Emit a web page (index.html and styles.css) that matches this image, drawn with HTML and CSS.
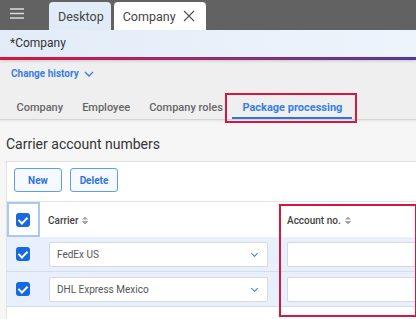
FILE: index.html
```html
<!DOCTYPE html>
<html lang="en">
<head>
  <meta charset="UTF-8">
  <title>Company</title>
  <link rel="stylesheet" href="styles.css">
</head>
<body>
  <div class="topbar">
    <div class="menu-btn">
      <svg width="14" height="11" viewBox="0 0 14 11"><path d="M0 1h14M0 5.5h14M0 10h14" stroke="#dcdcdc" stroke-width="1.6"/></svg>
    </div>
    <div class="doc-tab">Desktop</div>
    <div class="doc-tab active">Company
      <svg class="close" width="12" height="12" viewBox="0 0 12 12"><path d="M1 1l10 10M11 1L1 11" stroke="#555" stroke-width="1.2"/></svg>
    </div>
  </div>

  <div class="titlebar">*Company</div>
  <div class="accent"></div>

  <div class="upper">
    <a class="history">Change history
      <svg width="10" height="6" viewBox="0 0 10 6"><path d="M1 1l4 4 4-4" fill="none" stroke="#3a7fe0" stroke-width="1.3"/></svg>
    </a>
    <nav class="tabs">
      <span class="tab">Company</span>
      <span class="tab">Employee</span>
      <span class="tab">Company roles</span>
      <span class="tab selected">Package processing</span>
    </nav>
  </div>

  <div class="lower">
    <h2 class="section-title">Carrier account numbers</h2>
    <div class="panel">
      <div class="toolbar">
        <button class="btn">New</button>
        <button class="btn">Delete</button>
      </div>
      <div class="grid">
        <div class="cell head check-cell focus"><span class="check"></span></div>
        <div class="cell head">Carrier <span class="sort"></span></div>
        <div class="cell head account-head">Account no. <span class="sort"></span></div>

        <div class="cell row check-cell"><span class="check"></span></div>
        <div class="cell row"><div class="select">FedEx US<span class="chev"></span></div></div>
        <div class="cell row acc"><div class="input"></div></div>

        <div class="cell row check-cell"><span class="check"></span></div>
        <div class="cell row"><div class="select">DHL Express Mexico<span class="chev"></span></div></div>
        <div class="cell row acc"><div class="input"></div></div>
      </div>
    </div>
  </div>
</body>
</html>
```

FILE: styles.css
```css
* {
  margin: 0;
  padding: 0;
  box-sizing: border-box;
}

body {
  font-family: Roboto, 'Liberation Sans', sans-serif;
  width: 416px;
  height: 319px;
  overflow: hidden;
  background: #f6f6f6;
  color: #333;
}

/* top bar */
.topbar {
  height: 30px;
  background: #626262;
  display: flex;
  align-items: flex-end;
}

.menu-btn {
  width: 49px;
  height: 30px;
  display: flex;
  align-items: center;
  padding-left: 10px;
  padding-bottom: 3px;
}

.doc-tab {
  height: 28px;
  padding: 0 7px 0 9px;
  margin-right: 3px;
  border-radius: 4px 4px 0 0;
  background: #e2ecf8;
  font-size: 12.5px;
  color: #444;
  display: flex;
  align-items: center;
}

.doc-tab.active {
  background: #fff;
  padding-right: 11px;
}

.doc-tab .close {
  margin-left: 7px;
}

.titlebar {
  height: 27px;
  line-height: 27px;
  padding-left: 10px;
  font-size: 12px;
  color: #333;
  background: linear-gradient(90deg, #e2ecf8 0%, #eef4fb 100%);
}

.accent {
  height: 3px;
  background: linear-gradient(90deg, #d3163f 0%, #9a2a6c 45%, #4e3b98 100%);
  box-shadow: 0 1px 3px rgba(0, 0, 0, 0.18);
  position: relative;
}

/* upper area */
.upper {
  background: #efefef;
  padding-top: 7px;
  border-bottom: 1px solid #d4d4d4;
  box-shadow: 0 1px 2px rgba(0, 0, 0, 0.08);
}

.history {
  display: flex;
  width: fit-content;
  align-items: center;
  gap: 5px;
  margin-left: 11px;
  font-size: 10px;
  font-weight: 700;
  line-height: 14px;
  color: #3a7fe0;
}

.tabs {
  display: flex;
  margin-top: 12px;
  padding-left: 7px;
}

.tab {
  padding: 8px 9.5px 2px;
  line-height: 14px;
  font-size: 11px;
  font-weight: 500;
  color: #666;
  border-bottom: 2px solid transparent;
}

.tab.selected {
  color: #3a7fe0;
  font-weight: 700;
  padding: 8px 10px 2px;
  border-bottom-color: #2f74e0;
  position: relative;
}

.tab.selected::after {
  content: '';
  position: absolute;
  left: -7px;
  right: -5px;
  top: 0;
  bottom: -6px;
  border: 2px solid #d6173f;
}

/* lower area */
.section-title {
  font-size: 14px;
  font-weight: 400;
  color: #333;
  line-height: 18px;
  padding: 15px 0 8px 6px;
}

.panel {
  margin-left: 6px;
  width: 520px;
  background: #fff;
  border-top: 1px solid #e2e2e2;
  border-left: 1px solid #e2e2e2;
  height: 200px;
}

.toolbar {
  display: flex;
  gap: 8px;
  padding: 6px 7px 9px;
  border-bottom: 1px solid #e4e4e4;
}

.btn {
  width: 48px;
  height: 24px;
  border: 1.5px solid #5f9de8;
  border-radius: 3px;
  background: #f6f9fe;
  color: #2f74e0;
  font-family: inherit;
  font-size: 10px;
  font-weight: 700;
}

.grid {
  display: grid;
  grid-template-columns: 33px 239px 1fr;
}

.cell {
  display: flex;
  align-items: center;
  font-size: 10px;
  color: #444;
}

.cell.head {
  height: 35px;
  padding-left: 8px;
  font-weight: 500;
  padding-top: 1px;
}

.cell.row {
  height: 35px;
  background: #e7f0fc;
  border-bottom: 1px solid #d3deeb;
  padding-left: 9px;
}

.cell.acc {
  padding-left: 8px;
}

.check-cell.cell {
  padding-left: 9px;
}

.check-cell.focus {
  border: 2px solid #a9c9f0;
  padding-left: 7px;
}

.check {
  width: 14px;
  height: 14px;
  border-radius: 3px;
  background: #1769e0;
  display: inline-block;
  position: relative;
}

.check::after {
  content: '';
  position: absolute;
  left: 4px;
  top: 2px;
  width: 4px;
  height: 7px;
  border: solid #fff;
  border-width: 0 2px 2px 0;
  transform: rotate(45deg);
}

.sort {
  display: inline-block;
  width: 6px;
  height: 9px;
  margin-left: 4px;
  background:
    linear-gradient(135deg, transparent 50%, #a6a6a6 50%) 0 0 / 3px 3.5px no-repeat,
    linear-gradient(225deg, transparent 50%, #a6a6a6 50%) 3px 0 / 3px 3.5px no-repeat,
    linear-gradient(45deg, transparent 50%, #a6a6a6 50%) 0 5.5px / 3px 3.5px no-repeat,
    linear-gradient(315deg, transparent 50%, #a6a6a6 50%) 3px 5.5px / 3px 3.5px no-repeat;
}

.account-head {
  position: relative;
}

.account-head::after {
  content: '';
  position: absolute;
  left: 0;
  top: 2px;
  width: 134px;
  height: 109px;
  border: 2px solid #d6173f;
}

.select, .input {
  height: 25px;
  background: #fff;
  border: 1px solid #d8d8d8;
  border-radius: 2px;
  display: flex;
  align-items: center;
  font-size: 10px;
  color: #555;
}

.select {
  width: 219px;
  padding-left: 7px;
  position: relative;
}

.chev {
  position: absolute;
  right: 10px;
  top: 8px;
  width: 5px;
  height: 5px;
  border: solid #3a7fe0;
  border-width: 0 1.5px 1.5px 0;
  transform: rotate(45deg);
}

.input {
  width: 200px;
}
```
